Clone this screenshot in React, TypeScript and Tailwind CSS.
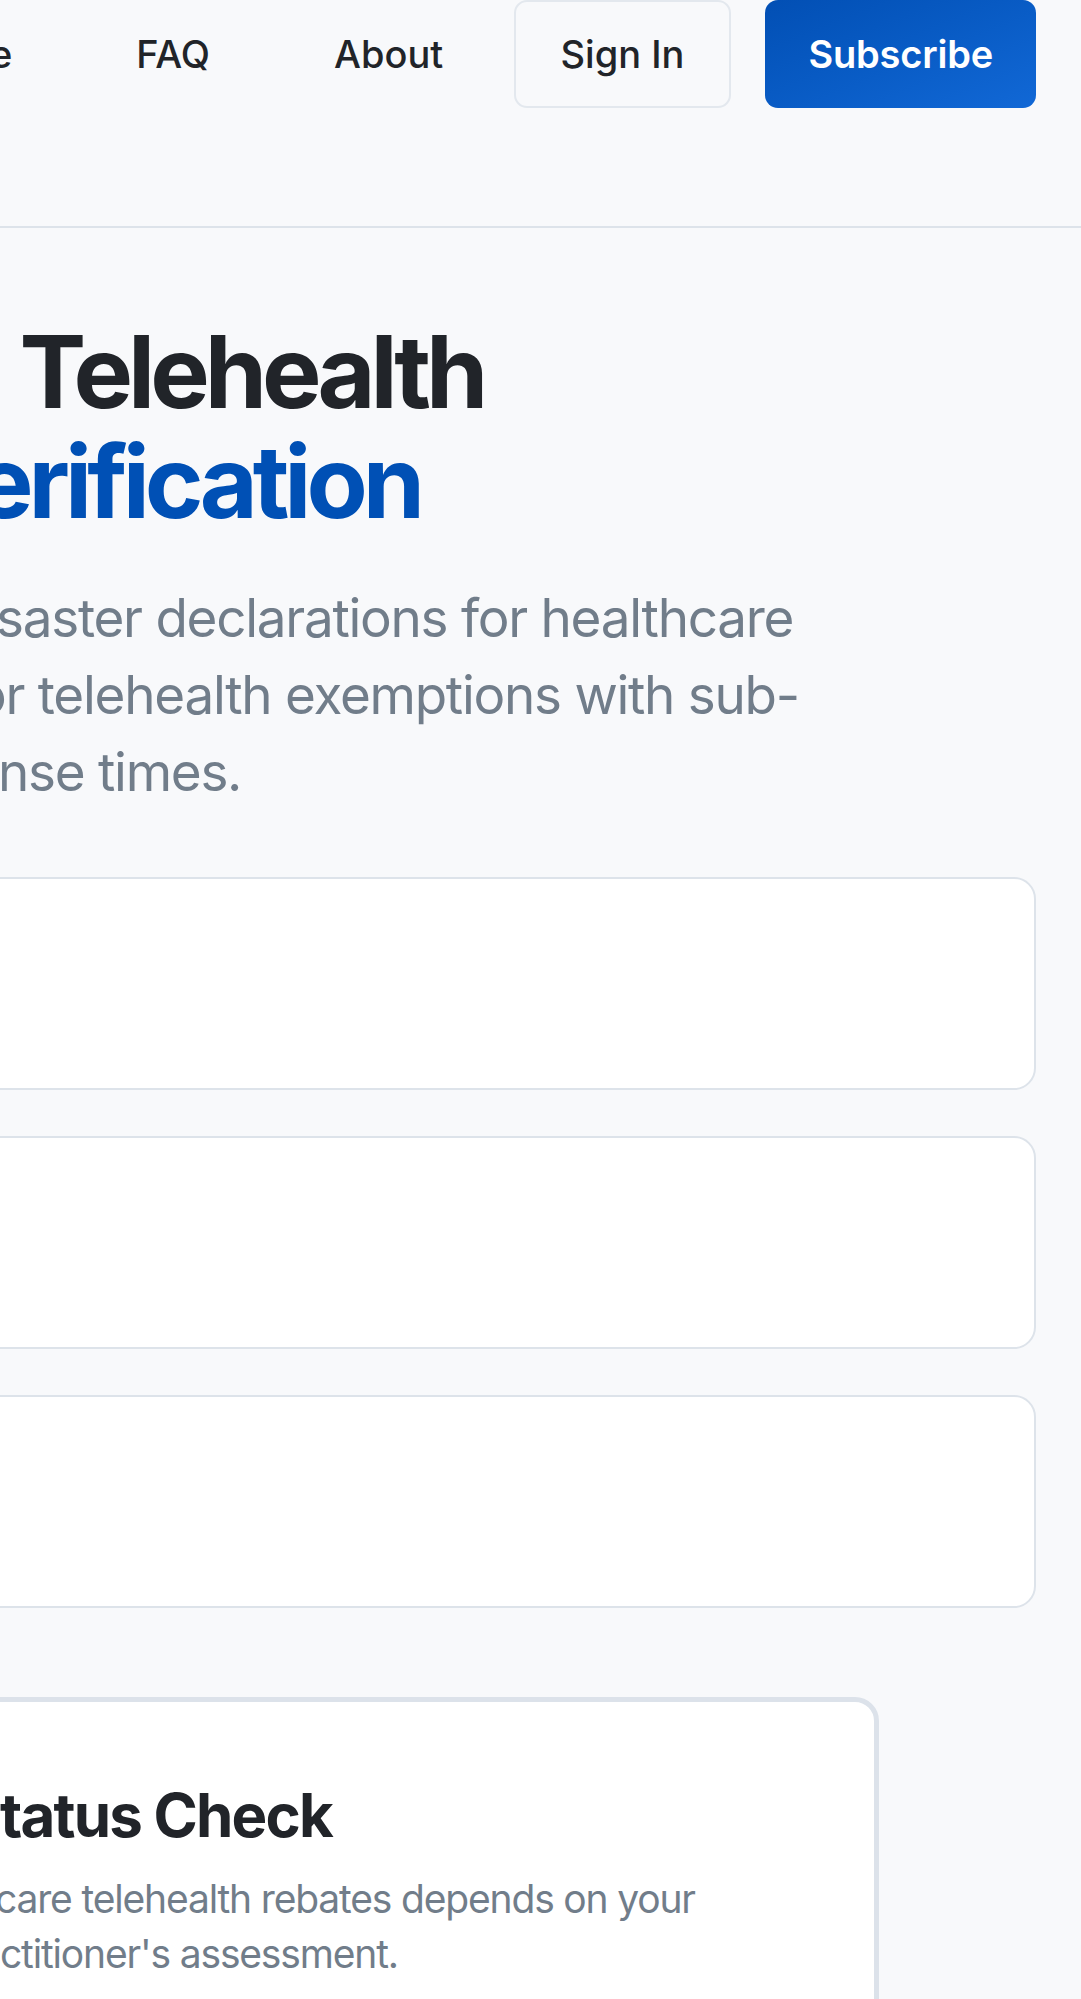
import React from 'react'

const navLinks = ['FAQ', 'About']

const cards = [0, 1, 2]

export default function App() {
  return (
    <div className="min-h-screen w-full overflow-hidden bg-[#f8f9fb] font-[Inter,sans-serif] text-[#212429]">
      {/* Top navigation */}
      <header className="border-b-2 border-[#dde3ea] pb-[118px]">
        <nav className="flex h-[108px] items-center pr-[45px]">
          <span className="-ml-[10px] whitespace-nowrap text-[38px] font-medium">e</span>
          <div className="ml-[124px] flex items-center gap-[124px]">
            {navLinks.map((l) => (
              <a key={l} className="whitespace-nowrap text-[38px] font-medium text-[#212429]">
                {l}
              </a>
            ))}
          </div>
          <div className="ml-auto flex items-center gap-[34px]">
            <button className="h-[108px] rounded-[13px] border-2 border-[#e3e8ee] px-[45px] text-[38px] font-medium text-[#212429]">
              Sign In
            </button>
            <button className="h-[108px] rounded-[13px] bg-gradient-to-br from-[#024fb4] to-[#1168d6] px-[43px] text-[38px] font-semibold tracking-[-0.005em] text-white">
              Subscribe
            </button>
          </div>
        </nav>
      </header>

      {/* Hero */}
      <section className="pr-[45px]">
        <h1 className="mt-[89px] text-[100px] font-bold leading-[110px] tracking-[-0.05em]">
          <span className="block whitespace-nowrap">
            <span className="-ml-[59px]">e</span>
            <span className="ml-[24px]">Telehealth</span>
          </span>
          <span className="-ml-[26px] block whitespace-nowrap text-[#0050b5]">erification</span>
        </h1>
        <p className="mt-[43px] text-[53px] leading-[77px] tracking-[-0.024em] text-[#717d8a]">
          <span className="-ml-[4px] block whitespace-nowrap">saster declarations for healthcare</span>
          <span className="-ml-[25px] block whitespace-nowrap">or telehealth exemptions with sub-</span>
          <span className="-ml-[2px] block whitespace-nowrap">nse times.</span>
        </p>

        {/* Feature cards */}
        <div className="-ml-[40px] mt-[66px] flex flex-col gap-[46px]">
          {cards.map((c) => (
            <div key={c} className="h-[213px] rounded-[22px] border-2 border-[#dde3ea] bg-white" />
          ))}
        </div>

        {/* Status check */}
        <div className="-ml-[40px] mt-[89px] w-[919px] rounded-[24px] border-[5px] border-[#dce2ea] bg-white pb-[80px] pl-[38px] pt-[77px]">
          <h2 className="-ml-[3px] whitespace-nowrap text-[60px] font-bold leading-[72px] tracking-[-0.03em]">
            tatus Check
          </h2>
          <p className="mt-[20px] text-[39px] leading-[55px] tracking-[-0.03em] text-[#717d8a]">
            <span className="-ml-[8px] block whitespace-nowrap">care telehealth rebates depends on your</span>
            <span className="-ml-[3px] block whitespace-nowrap">ctitioner's assessment.</span>
          </p>
        </div>
      </section>
    </div>
  )
}
